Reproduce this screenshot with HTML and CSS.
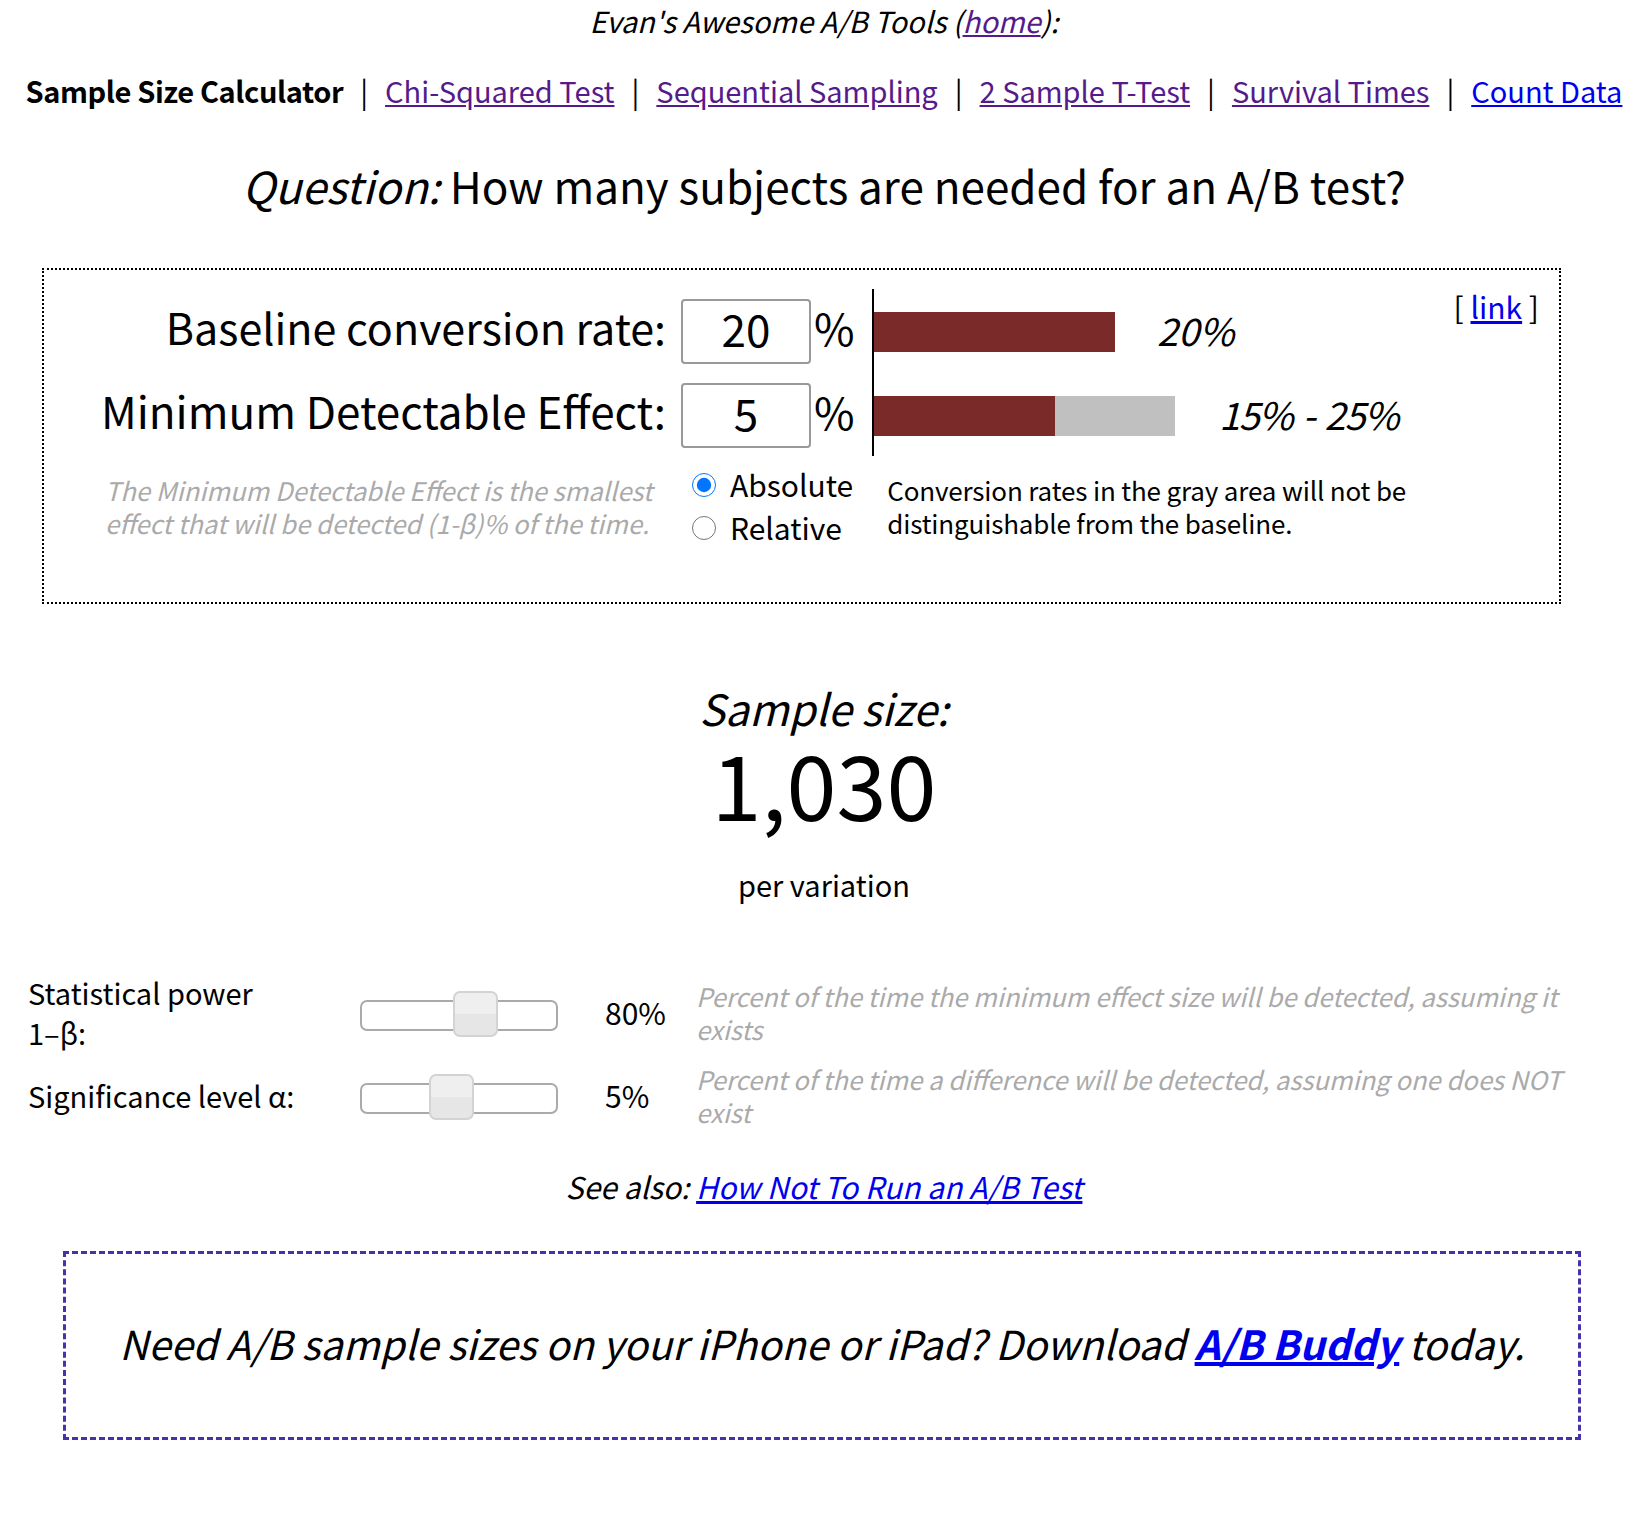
FILE: index.html
```html
<!DOCTYPE html>
<html lang="en">
<head>
<meta charset="utf-8">
<title>Sample Size Calculator</title>
<link rel="stylesheet" href="styles.css">
</head>
<body>
<div class="page">
  <p class="tools">Evan's Awesome A/B Tools (<a class="visited" href="#">home</a>):</p>
  <nav class="nav">
    <b>Sample Size Calculator</b><span class="sep">|</span><a class="visited" href="#">Chi-Squared Test</a><span class="sep">|</span><a class="visited" href="#">Sequential Sampling</a><span class="sep">|</span><a class="visited" href="#">2 Sample T-Test</a><span class="sep">|</span><a class="visited" href="#">Survival Times</a><span class="sep">|</span><a href="#">Count Data</a>
  </nav>
  <h1 class="question"><i>Question:</i> How many subjects are needed for an A/B test?</h1>

  <div class="calc">
    <div class="calc-top">
      <div class="fields">
        <label class="field-label baseline">Baseline conversion rate:</label>
        <input class="num" type="text" value="20">
        <span class="pct">%</span>
        <label class="field-label">Minimum Detectable Effect:</label>
        <input class="num" type="text" value="5">
        <span class="pct">%</span>
      </div>
      <div class="chart">
        <div class="bar-row">
          <div class="bar-track"><div class="bar red" style="width:241px"></div></div>
          <span class="bar-text">20%</span>
        </div>
        <div class="bar-row">
          <div class="bar-track"><div class="bar red" style="width:181px"></div><div class="bar gray" style="width:120px"></div></div>
          <span class="bar-text range">15% - 25%</span>
        </div>
      </div>
      <div class="permalink">[ <a href="#">link</a> ]</div>
    </div>
    <div class="calc-bottom">
      <div class="desc-cell"><p class="desc">The Minimum Detectable Effect is the smallest<br>effect that will be detected (1-β)% of the time.</p></div>
      <div class="radios">
        <label class="radio"><input type="radio" name="mde" checked> Absolute</label>
        <label class="radio"><input type="radio" name="mde"> Relative</label>
      </div>
      <p class="note">Conversion rates in the gray area will not be<br>distinguishable from the baseline.</p>
    </div>
  </div>

  <div class="result">
    <div class="result-title">Sample size:</div>
    <div class="result-num">1,030</div>
    <div class="result-sub">per variation</div>
  </div>

  <div class="params">
    <div class="p-label">Statistical power<br>1–β:</div>
    <div class="slider"><div class="thumb" style="left:91px"></div></div>
    <div class="p-val">80%</div>
    <div class="p-desc">Percent of the time the minimum effect size will be detected, assuming it exists</div>

    <div class="p-label">Significance level α:</div>
    <div class="slider"><div class="thumb" style="left:67px"></div></div>
    <div class="p-val">5%</div>
    <div class="p-desc">Percent of the time a difference will be detected, assuming one does NOT exist</div>
  </div>

  <p class="see-also">See also: <a href="#">How Not To Run an A/B Test</a></p>

  <div class="promo">
    <p>Need A/B sample sizes on your iPhone or iPad? Download <a href="#"><b>A/B Buddy</b></a> today.</p>
  </div>
</div>
</body>
</html>
```
FILE: styles.css
```css
* { box-sizing: border-box; }
html, body { margin: 0; padding: 0; background: #fff; }
body {
  font-family: "Noto Sans CJK KR", "Noto Sans", sans-serif;
  color: #000;
}
a { color: #0000ee; text-decoration: underline; }
a.visited { color: #551a8b; }

.page { padding: 0 4px 60px 16px; }

.tools {
  margin: 0;
  height: 44px;
  line-height: 40px;
  text-align: center;
  font-style: italic;
  font-size: 29px;
}

.nav {
  margin-top: 24px;
  height: 44px;
  line-height: 44px;
  text-align: center;
  font-size: 29px;
  white-space: nowrap;
}
.nav b { font-weight: 700; letter-spacing: -0.4px; }
.nav .sep { margin: 0 17px; }

.question {
  margin: 43px 0 0;
  height: 60px;
  line-height: 60px;
  text-align: center;
  font-size: 44px;
  font-weight: 400;
}

.calc {
  margin: 53px 0 0 26px;
  width: 1519px;
  border: 2px dotted #000;
  padding: 19px 20px 54px 0;
}
.calc-top { display: flex; align-items: stretch; }
.fields {
  width: 828px;
  padding: 10px 22px 8px 0;
  display: grid;
  grid-template-columns: 622px 130px 36px;
  grid-template-rows: 65px 65px;
  row-gap: 19px;
  align-items: start;
}
.field-label {
  text-align: right;
  font-size: 44px;
  line-height: 55px;
}
.field-label.baseline { font-size: 43px; }
.num {
  margin-left: 15px;
  width: 130px;
  height: 65px;
  border: 2px solid #999;
  border-radius: 4px;
  font-family: inherit;
  font-size: 44px;
  text-align: center;
  padding: 0 0 8px;
  color: #000;
  background: #fff;
}
.pct {
  margin-left: 18px;
  font-size: 44px;
  line-height: 57px;
}
.chart {
  border-left: 2px solid #000;
  padding: 10px 0 8px;
  display: grid;
  grid-template-rows: 65px 65px;
  row-gap: 19px;
}
.bar-row { display: flex; align-items: center; }
.bar-track { display: flex; height: 40px; }
.bar { height: 40px; }
.bar.red { background: #7a2a28; }
.bar.gray { background: #c0c0c0; }
.bar-text {
  margin-left: 42px;
  font-style: italic;
  font-size: 38px;
  padding-bottom: 5px;
}
.bar-text.range { margin-left: 44px; letter-spacing: -1.3px; word-spacing: 3px; }
.permalink {
  margin-left: auto;
  font-size: 30px;
  line-height: 34px;
}

.calc-bottom { display: flex; margin-top: 17px; }
.desc-cell { width: 622px; flex: none; }
.desc {
  margin: 0 0 0 61px;
  white-space: nowrap;
  font-size: 25.6px;
  line-height: 33px;
  font-style: italic;
  color: #aaa;
}
.radios {
  margin: -11px 0 0 26px;
  display: flex;
  flex-direction: column;
}
.radio {
  display: flex;
  align-items: center;
  height: 43px;
  font-size: 30px;
}
.radio input {
  width: 24px;
  height: 24px;
  margin: 2px 14px 0 0;
}
.note {
  margin: 0 0 0 34px;
  white-space: nowrap;
  font-size: 26px;
  letter-spacing: -0.15px;
  line-height: 33px;
}

.result { text-align: center; }
.result-title {
  margin-top: 75px;
  font-size: 43px;
  line-height: 56px;
  font-style: italic;
}
.result-num {
  margin-top: -1px;
  font-size: 90px;
  line-height: 96px;
}
.result-sub {
  margin-top: 34px;
  font-size: 29px;
  line-height: 40px;
}

.params {
  margin: 68px 0 0 12px;
  display: grid;
  grid-template-columns: 332px 198px 138px 872px;
  row-gap: 10px;
  align-items: center;
}
.p-label { font-size: 29px; line-height: 40px; white-space: nowrap; }
.slider {
  position: relative;
  width: 198px;
  height: 31px;
  border: 2px solid #aaa;
  border-radius: 7px;
  background: #fff;
  margin-top: 6px;
}
.p-val { font-size: 30px; margin-left: 47px; }
.thumb {
  position: absolute;
  top: -11px;
  width: 45px;
  height: 46px;
  border: 2px solid #d3d3d3;
  border-radius: 7px;
  background: linear-gradient(#efefef 0%, #efefef 50%, #e6e6e6 50%, #e6e6e6 100%);
}
.p-desc {
  font-size: 25.6px;
  line-height: 33px;
  font-style: italic;
  color: #aaa;
}

.see-also {
  margin: 38px 0 0;
  text-align: center;
  font-size: 30px;
  line-height: 40px;
  font-style: italic;
}

.promo {
  margin: 45px 0 0 47px;
  width: 1518px;
  height: 189px;
  border: 3px dashed #4433aa;
  display: flex;
  align-items: center;
  justify-content: center;
  padding-bottom: 6px;
}
.promo p {
  margin: 0;
  font-size: 40px;
  font-style: italic;
}
```
